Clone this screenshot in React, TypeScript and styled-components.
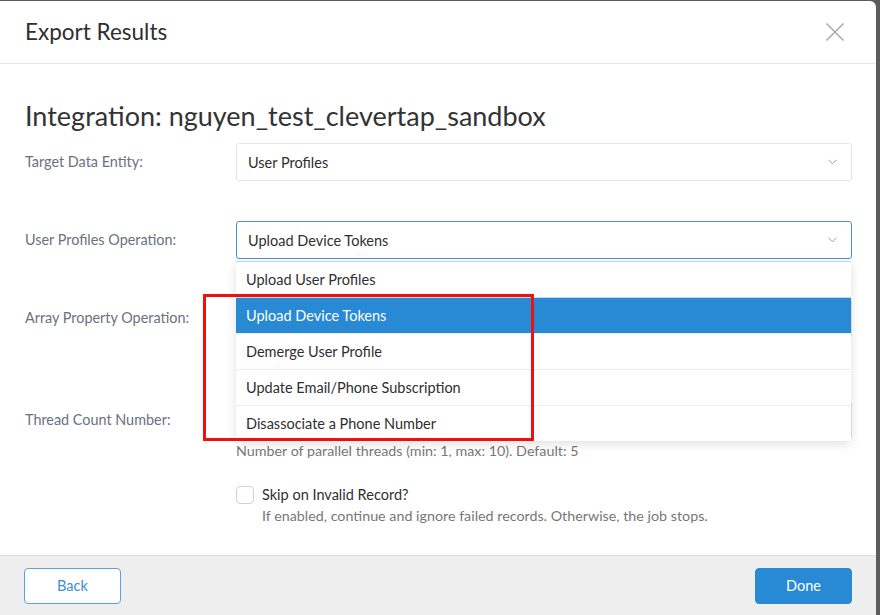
import React from "react";
import styled, { createGlobalStyle } from "styled-components";

const Global = createGlobalStyle`
  html, body {
    margin: 0;
    padding: 0;
    background: #5c5c5c;
    font-family: Lato, "Noto Sans", sans-serif;
    overflow: hidden;
  }
`;

const Modal = styled.div`
  position: relative;
  margin-top: 1px;
  width: 876px;
  height: 614px;
  background: #fff;
  border-top-right-radius: 6px;
  display: flex;
  flex-direction: column;
  overflow: hidden;
`;

const Header = styled.div`
  height: 63px;
  flex: none;
  display: flex;
  align-items: center;
  justify-content: space-between;
  padding: 0 30px 1px 25px;
  box-sizing: border-box;
  border-bottom: 1px solid #e6e6e6;
`;

const Title = styled.h2`
  margin: 0;
  font-size: 22.5px;
  font-weight: 400;
  color: #2f2f2f;
`;

const Close = styled.button`
  border: 0;
  background: none;
  padding: 0;
  margin-top: 1px;
  width: 22px;
  height: 22px;
  display: flex;
  align-items: center;
  justify-content: center;
`;

const Body = styled.div`
  flex: 1;
  padding: 36px 24px 0 25px;
`;

const Heading = styled.h1`
  margin: 0 0 11px;
  font-size: 27px;
  font-weight: 400;
  color: #333;
  line-height: 32px;
`;

const Row = styled.div<{ $gap?: number }>`
  display: grid;
  grid-template-columns: 211px 1fr;
  align-items: start;
  margin-bottom: ${(p) => p.$gap ?? 40}px;
`;

const Label = styled.div`
  font-size: 14.4px;
  color: #6a7280;
  line-height: 38px;
`;

const Field = styled.div`
  position: relative;
`;

const Select = styled.div<{ $focused?: boolean }>`
  height: 38px;
  box-sizing: border-box;
  border: 1px solid ${(p) => (p.$focused ? "#4a93d6" : "#e6e6e6")};
  border-radius: 3px;
  display: flex;
  align-items: center;
  justify-content: space-between;
  padding: 0 14px 0 11px;
  font-size: 14.5px;
  color: #2f2f2f;
  background: #fff;
`;

const Input = styled(Select)``;

const Help = styled.div`
  font-size: 14.3px;
  color: #777;
  margin-top: 3px;
  line-height: 17px;
`;

const Menu = styled.ul`
  position: absolute;
  top: 40px;
  left: 0;
  right: 1px;
  margin: 0;
  padding: 0;
  list-style: none;
  background: #fff;
  box-shadow: 0 3px 10px rgba(0, 0, 0, 0.12);
  z-index: 5;
`;

const Option = styled.li<{ $active?: boolean }>`
  height: 36px;
  box-sizing: border-box;
  display: flex;
  align-items: center;
  padding: 0 10px;
  font-size: 14.5px;
  color: ${(p) => (p.$active ? "#fff" : "#2f2f2f")};
  background: ${(p) => (p.$active ? "#2889d4" : "#fff")};
  border-top: 1px solid ${(p) => (p.$active ? "#b9d7ef" : "#ececec")};
  &:first-child {
    border-top-color: #b9d7ef;
  }
`;

const CheckRow = styled.div`
  display: grid;
  grid-template-columns: 26px 1fr;
  margin-left: 211px;
  margin-top: 27px;
`;

const Box = styled.div`
  width: 18px;
  height: 18px;
  box-sizing: border-box;
  border: 1px solid #d2d2d2;
  border-radius: 4px;
`;

const CheckLabel = styled.div`
  font-size: 14.5px;
  color: #2f2f2f;
  line-height: 18px;
`;

const Footer = styled.div`
  height: 59px;
  flex: none;
  background: #eeeeee;
  border-top: 1px solid #dedede;
  display: flex;
  align-items: center;
  justify-content: space-between;
  padding: 0 24px 0 24px;
`;

const Btn = styled.button<{ $primary?: boolean }>`
  width: 97px;
  height: 36px;
  border-radius: 4px;
  font-family: inherit;
  font-size: 14.5px;
  border: 1px solid ${(p) => (p.$primary ? "#2889d4" : "#5aa2df")};
  background: ${(p) => (p.$primary ? "#2889d4" : "#fff")};
  color: ${(p) => (p.$primary ? "#fff" : "#3a8fd6")};
`;

const Annotation = styled.div`
  position: absolute;
  left: 203px;
  top: 293px;
  width: 331px;
  height: 147px;
  box-sizing: border-box;
  border: 3px solid #ee1111;
  pointer-events: none;
  z-index: 10;
`;

const Chevron = () => (
  <svg width="9" height="6" viewBox="0 0 9 6">
    <polyline points="0.5,0.8 4.5,4.8 8.5,0.8" fill="none" stroke="#9a9a9a" strokeWidth="1" />
  </svg>
);

const options = [
  "Upload User Profiles",
  "Upload Device Tokens",
  "Demerge User Profile",
  "Update Email/Phone Subscription",
  "Disassociate a Phone Number",
];

export default function App() {
  return (
    <>
      <Global />
      <Modal>
        <Header>
          <Title>Export Results</Title>
          <Close aria-label="Close">
            <svg width="20" height="20" viewBox="0 0 20 20">
              <path d="M1.5 1.5 L18.5 18.5 M18.5 1.5 L1.5 18.5" stroke="#ababab" strokeWidth="1.6" />
            </svg>
          </Close>
        </Header>
        <Body>
          <Heading>Integration: nguyen_test_clevertap_sandbox</Heading>
          <Row>
            <Label>Target Data Entity:</Label>
            <Select>
              User Profiles
              <Chevron />
            </Select>
          </Row>
          <Row>
            <Label>User Profiles Operation:</Label>
            <Field>
              <Select $focused>
                Upload Device Tokens
                <Chevron />
              </Select>
              <Menu>
                {options.map((o) => (
                  <Option key={o} $active={o === "Upload Device Tokens"}>
                    {o}
                  </Option>
                ))}
              </Menu>
            </Field>
          </Row>
          <Row $gap={64}>
            <Label>Array Property Operation:</Label>
            <Select />
          </Row>
          <Row $gap={0}>
            <Label>Thread Count Number:</Label>
            <Field>
              <Input />
              <Help>Number of parallel threads (min: 1, max: 10). Default: 5</Help>
            </Field>
          </Row>
          <CheckRow>
            <Box />
            <div>
              <CheckLabel>Skip on Invalid Record?</CheckLabel>
              <Help>If enabled, continue and ignore failed records. Otherwise, the job stops.</Help>
            </div>
          </CheckRow>
        </Body>
        <Footer>
          <Btn>Back</Btn>
          <Btn $primary>Done</Btn>
        </Footer>
        <Annotation />
      </Modal>
    </>
  );
}
